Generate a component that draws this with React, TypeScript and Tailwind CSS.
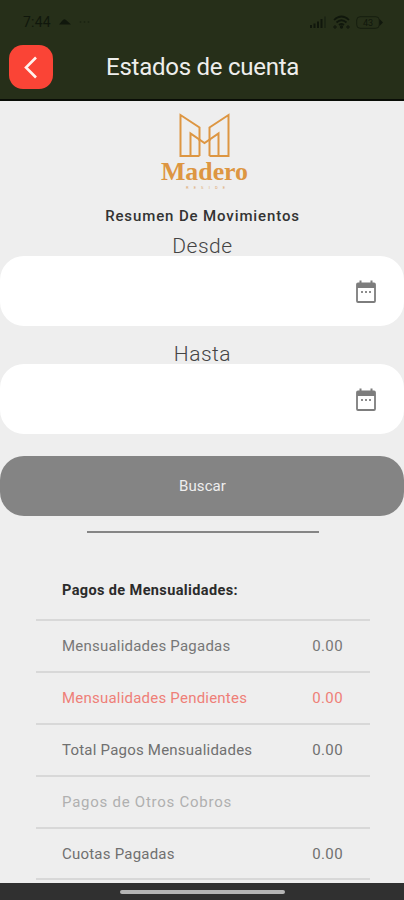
import { clsx } from 'clsx';

const rows = [
  { label: 'Mensualidades Pagadas', value: '0.00', color: 'text-[#777777]', spacing: 'tracking-[0.22px]' },
  { label: 'Mensualidades Pendientes', value: '0.00', color: 'text-[#ef7f78]', spacing: 'tracking-[0.22px]' },
  { label: 'Total Pagos Mensualidades', value: '0.00', color: 'text-[#707070]', spacing: 'tracking-[0.22px]' },
  { label: 'Pagos de Otros Cobros', value: '', color: 'text-[#b0b0b0]', spacing: 'tracking-[0.75px]' },
  { label: 'Cuotas Pagadas', value: '0.00', color: 'text-[#707070]', spacing: 'tracking-[0.22px]' },
];

function StatusBar() {
  return (
    <div className="flex h-11 items-center justify-between pl-[23px] pr-[21px] text-[#10170c]">
      <div className="flex items-center gap-2">
        <span className="w-7 text-sm leading-none tracking-[0.2px]">7:44</span>
        <svg width="12" height="8" viewBox="0 0 12 8" fill="currentColor">
          <path d="M0 6.500 L3 3 Q5 0 7 2 L12 6.500 Z" />
        </svg>
        <svg width="12" height="4" viewBox="0 0 12 4" fill="currentColor" opacity="0.6">
          <circle cx="1.5" cy="2" r="0.8" />
          <circle cx="5.5" cy="2" r="0.8" />
          <circle cx="9.5" cy="2" r="0.8" />
        </svg>
      </div>
      <div className="flex items-center gap-[6px]">
        <svg width="17" height="12" viewBox="0 0 17 12" fill="currentColor">
          <path d="M0 9h2v3H0zM3.5 7.5h2V12h-2zM7 5.5h2V12H7zM10.5 3h2v9h-2z" />
          <path d="M14 0.5h2V12h-2z" opacity="0.4" />
        </svg>
        <svg width="17" height="14" viewBox="0 0 17 14" fill="none" stroke="currentColor" strokeWidth="1.7">
          <path d="M1 5Q8.500 -2 16 5M3.500 7.500Q8.500 3 13.500 7.500M6 10Q8.500 8 11 10" />
          <path d="M2 10v4M4 12H0M15 10v4M13 12h4" strokeWidth="1" />
          <circle cx="8.500" cy="12" r="0.8" fill="currentColor" />
        </svg>
        <svg width="27" height="13" viewBox="0 0 27 13">
          <rect x="0.7" y="0.7" width="22.600" height="11.600" rx="3.500" fill="none" stroke="currentColor" opacity="0.7" />
          <path d="M23.500 3 L27 6.500 L23.500 10 Z" fill="currentColor" />
          <text x="12" y="10" textAnchor="middle" fontSize="9" fontFamily="Roboto, sans-serif" fill="currentColor">43</text>
        </svg>
      </div>
    </div>
  );
}

function Header() {
  return (
    <header className="h-[101px] shrink-0 border-b-2 border-[#090d06] bg-[#262f19]">
      <StatusBar />
      <div className="flex items-center pl-[9px] pt-px">
        <button className="flex size-11 items-center justify-center rounded-[14px] bg-[#fa4436]">
          <svg width="14" height="23" viewBox="0 0 14 23" fill="none" stroke="#fff3ee" strokeWidth="2.600">
            <path d="M12 1.500 L2 11.500 L12 21.500" />
          </svg>
        </button>
        <h1 className="ml-[53px] whitespace-nowrap text-2xl leading-[44px] tracking-[-0.25px] text-[#eeeeec]">
          Estados de cuenta
        </h1>
      </div>
    </header>
  );
}

function Logo() {
  return (
    <svg className="mx-auto block" width="100" height="84" viewBox="152 109 100 84" fill="none">
      <g stroke="#dd9642" strokeWidth="2">
        <path d="M199.500 156 H180.500 V115 L199.500 127.500 V141" />
        <path d="M209.500 141 V127.500 L228.500 115 V156 H209.500" />
        <path d="M190.500 156 V133.500 L204.500 143 L218.500 133.500 V156" />
        <path d="M199.500 156 V139 M209.500 156 V139" />
      </g>
      <text x="161" y="180" textLength="87" lengthAdjust="spacingAndGlyphs" fontFamily="Liberation Serif, serif" fontWeight="700" fontSize="26" fill="#dd9642">Madero</text>
      <text x="186" y="189" textLength="39" fontFamily="Roboto, sans-serif" fontSize="4" fill="#dda566">RESIDE</text>
    </svg>
  );
}

function CalendarIcon() {
  return (
    <svg width="22" height="24" viewBox="0 0 22 24" fill="none">
      <path d="M5.500 0.500v3M16.500 0.500v3" stroke="#7d7d7d" strokeWidth="2" />
      <rect x="2" y="3.500" width="18" height="18.500" rx="1" stroke="#7d7d7d" strokeWidth="1.800" />
      <path d="M2 3h18v5H2z" fill="#7d7d7d" />
      <path d="M6 11h2v2H6zM10 11h2v2h-2zM14 11h2v2h-2z" fill="#8d8d8d" />
    </svg>
  );
}

function DateField({ label, className }: { label: string; className?: string }) {
  return (
    <div className={className}>
      <div className="h-[22px] pl-px text-center text-[21px] font-light leading-[24px] tracking-[0.5px] text-[#444444]">{label}</div>
      <div className="flex h-[70px] items-center justify-end rounded-[24px] bg-white pr-[27px] pt-px">
        <CalendarIcon />
      </div>
    </div>
  );
}

export default function App() {
  return (
    <div className="flex h-[900px] w-[404px] flex-col overflow-hidden bg-[#eeeeee] font-['Roboto',sans-serif]">
      <Header />

      <main className="min-h-0 flex-1 overflow-hidden">
        <div className="pt-2">
          <Logo />
        </div>
        <h2 className="mt-[13px] h-[22px] pl-px text-center text-[15px] font-medium leading-[21px] tracking-[0.88px] text-[#333333]">
          Resumen De Movimientos
        </h2>
        <DateField label="Desde" className="mt-[6px]" />
        <DateField label="Hasta" className="mt-4" />

        <button className="mt-[22px] block h-[60px] w-full rounded-[24px] bg-[#848484] pl-px text-[15px] tracking-[0.1px] text-[#eeeeee]">
          Buscar
        </button>
        <div className="ml-[87px] mt-[15px] h-[2px] w-[232px] bg-[#858585]" />

        <section className="ml-9 mt-7 w-[334px]">
          <h3 className="h-[58px] pl-[26px] text-[14.5px] font-bold leading-[60px] tracking-[0.38px] text-[#2b2b2b]">
            Pagos de Mensualidades:
          </h3>
          {rows.map((row) => (
            <div
              key={row.label}
              className={clsx(
                'flex h-[51.9px] items-center justify-between border-t-2 border-[#d8d8d8] pl-[26px] pr-[27px] pt-px text-[15px]',
                row.color,
              )}
            >
              <span className={row.spacing}>{row.label}</span>
              <span className="tracking-[0.4px]">{row.value}</span>
            </div>
          ))}
          <div className="h-[2px] bg-[#d8d8d8]" />
        </section>
      </main>

      {/* Gesture bar */}
      <footer className="flex h-[17px] shrink-0 items-center justify-center bg-[#303030]">
        <div className="h-1 w-[165px] rounded-full bg-[#b5b5b5]" />
      </footer>
    </div>
  );
}
